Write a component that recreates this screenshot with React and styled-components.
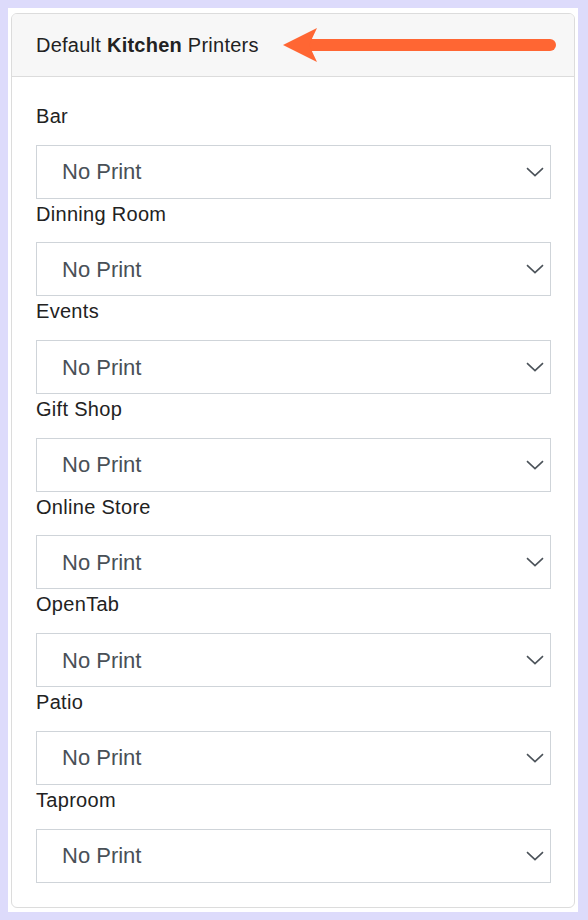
import React from 'react'
import styled, { createGlobalStyle } from 'styled-components'

const rooms = [
  'Bar',
  'Dinning Room',
  'Events',
  'Gift Shop',
  'Online Store',
  'OpenTab',
  'Patio',
  'Taproom',
]

const GlobalStyle = createGlobalStyle`
  body{
    margin:0;
    background:#dddbfb;
    font-family:"Liberation Sans", Arial, sans-serif;
  }
`

const Frame = styled.div`
  margin:8px 10px 8px 8px;
  background:#fff;
  padding:5px 3px 4px 3px;
`

const Card = styled.section`
  border:1px solid #dcdcdc;
  border-radius:6px;
  overflow:hidden;
  background:#fff;
`

const Header = styled.div`
  position:relative;
  height:62px;
  display:flex;
  align-items:center;
  padding:0 24px;
  background:#f7f7f7;
  border-bottom:1px solid #dcdcdc;
  font-size:20px;
  letter-spacing:0.25px;
  color:#222;
  b{
    font-weight:700;
  }
`

const Pointer = styled.svg`
  position:absolute;
  left:271px;
  top:14px;
`

const Body = styled.div`
  padding:24px 23px 24px 24px;
`

const Group = styled.div`
  display:flex;
  flex-direction:column;
`

const Label = styled.label`
  display:block;
  padding-top:2px;
  line-height:26px;
  margin-bottom:15.7px;
  font-size:20px;
  letter-spacing:0.3px;
  color:#222;
`

const SelectWrap = styled.div`
  position:relative;
  height:54px;
`

const Select = styled.select`
  appearance:none;
  -webkit-appearance:none;
  width:100%;
  height:100%;
  box-sizing:border-box;
  border:1px solid #cfd4d9;
  border-radius:0;
  background:#fff;
  padding:0 50px 0 25px;
  font-family:"Liberation Sans", Arial, sans-serif;
  font-size:22px;
  color:#495057;
  outline:none;
`

const Chevron = styled.svg`
  position:absolute;
  right:7px;
  top:50%;
  transform:translateY(-50%);
  pointer-events:none;
`

const PrinterSelect = ({ id }) => (
  <SelectWrap>
    <Select id={id} defaultValue="none">
      <option value="none">No Print</option>
    </Select>
    <Chevron width="18" height="10" viewBox="0 0 18 10">
      <path d="M1 1.2 L9 8.6 L17 1.2" fill="none" stroke="#4b5259" strokeWidth="1.6" />
    </Chevron>
  </SelectWrap>
)

const App = () => {
  return (
    <>
      <GlobalStyle />
      <Frame>
        <Card>
          <Header>
            <span>
              Default <b>Kitchen</b> Printers
            </span>
            <Pointer width="276" height="36" viewBox="0 0 276 36">
              <line x1="24" y1="17" x2="267" y2="17" stroke="#ff6633" strokeWidth="12" strokeLinecap="round" />
              <polygon points="0,17 34,0 26,17 34,34" fill="#ff6633" />
            </Pointer>
          </Header>
          <Body>
            {rooms.map((room, i) => (
              <Group key={room}>
                <Label htmlFor={'room-' + i}>{room}</Label>
                <PrinterSelect id={'room-' + i} />
              </Group>
            ))}
          </Body>
        </Card>
      </Frame>
    </>
  )
}

export default App
